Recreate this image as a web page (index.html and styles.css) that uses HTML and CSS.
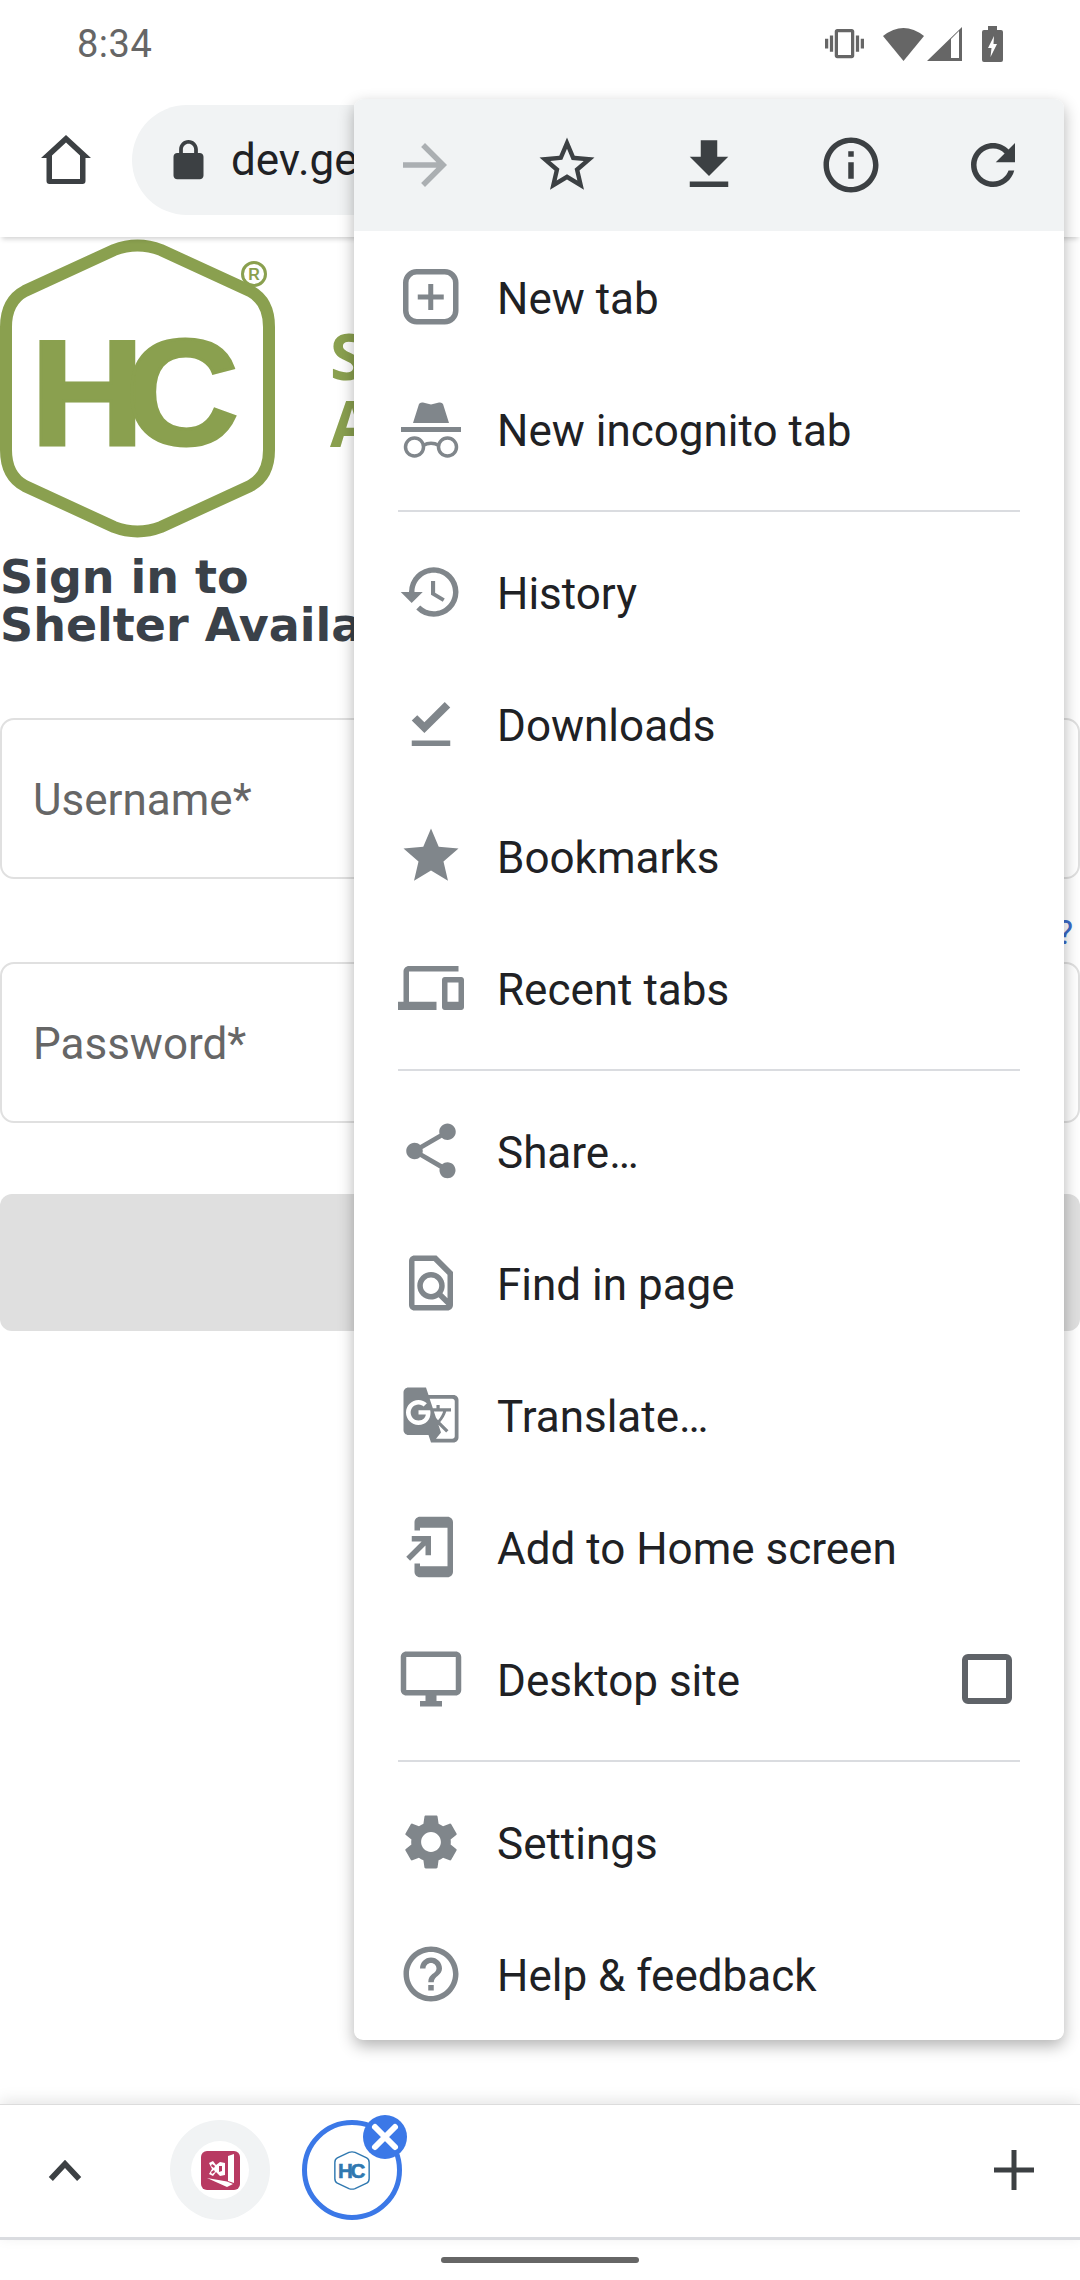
FILE: index.html
```html
<!DOCTYPE html>
<html>
<head>
  <title>Sign in - Shelter Availability</title>
  <link rel="stylesheet" href="styles.css">
</head>
<body>
  <div class="phone">
    <div class="status">
      <span class="time">8:34</span>
      <div class="status-icons">
        <svg class="st-vibrate" viewBox="0 0 24 24"><path d="M0 15h2V9H0v6zm3 2h2V7H3v10zm19-8v6h2V9h-2zm-3 8h2V7h-2v10zM16.5 3h-9C6.67 3 6 3.67 6 4.5v15c0 .83.67 1.5 1.5 1.5h9c.83 0 1.5-.67 1.5-1.5v-15c0-.83-.67-1.5-1.5-1.5zM16 19H8V5h8v14z"/></svg>
        <svg class="st-wifi" viewBox="0 0 41 34"><path d="M0 9Q20.500 -7 41 9L20.500 34Z"/></svg>
        <svg class="st-signal" viewBox="0 0 35 34"><path fill-rule="evenodd" d="M0 34L35 0V34ZM24 12V31H32V4Z"/></svg>
        <svg class="st-battery" viewBox="0 0 21 36"><path fill-rule="evenodd" d="M6 0H15V4H19Q21 4 21 6V34Q21 36 19 36H2Q0 36 0 34V6Q0 4 2 4H6ZM12 10L6 22H9.500L8.500 31L15 18H11.500Z"/></svg>
      </div>
    </div>

    <div class="toolbar">
      <svg class="home" viewBox="0 0 66 66"><path fill-rule="evenodd" d="M33 8L58 31H52.500V54Q52.500 57 49.500 57H16.500Q13.500 57 13.500 54V31H8ZM33 15.500L19 28.500V52H47V28.500Z"/></svg>
      <div class="omnibox">
        <svg class="lock" viewBox="0 0 24 24"><path d="M18 8h-1V6c0-2.760-2.240-5-5-5S7 3.240 7 6v2H6c-1.100 0-2 .9-2 2v10c0 1.100.9 2 2 2h12c1.100 0 2-.9 2-2V10c0-1.100-.9-2-2-2zM9 6c0-1.660 1.340-3 3-3s3 1.340 3 3v2H9V6z"/></svg>
        <span class="url">dev.ge</span>
      </div>
    </div>

    <main class="page">
      <div class="brand">
        <svg class="logo" viewBox="0 0 275 299">
          <path class="logo-hex" d="M114 11Q137.500 2 161 11L250 52Q269 62 269 88V211Q269 237 250 247L161 288Q137.500 297 114 288L25 247Q6 237 6 211V88Q6 62 25 52Z"/>
          <circle class="logo-reg" cx="254" cy="35" r="11.500"/>
          <text class="logo-r" x="254" y="41">R</text>
          <text class="logo-hc" transform="scale(1.050 1)" x="29" y="206.500">HC</text>
        </svg>
        <div class="brand-name">S<br>A</div>
      </div>
      <h1 class="signin">Sign in to<br>Shelter Availa</h1>
      <div class="field">Username*</div>
      <div class="forgot">?</div>
      <div class="field">Password*</div>
      <div class="submit"></div>
    </main>

    <div class="tabs">
      <div class="chevron">
        <svg viewBox="0 0 36 24"><path d="M3 21L18 5L33 21" /></svg>
      </div>
      <div class="tab">
        <div class="tab-inner">
          <svg class="favicon" viewBox="0 0 39 39">
            <rect width="39" height="39" rx="6" fill="#b83a62"/>
            <path fill="#fff" d="M27 5L33 3V32L27 30ZM6 27L26 30.500L32 33L26 36Z"/>
            <path fill="#fff" fill-rule="evenodd" d="M8 12L12 10L15 14L19 11L24 12V24L19 25L15 21L12 25L8 23L11 18ZM18 15V21L21 20V15ZM11 13L10 15L13 17L14 15ZM10 21L11 23L14 21L13 19Z"/>
          </svg>
        </div>
      </div>
      <div class="tab tab-active">
        <svg class="tab-logo" viewBox="0 0 275 299">
          <path class="mini-hex" d="M114 11Q137.500 2 161 11L250 52Q269 62 269 88V211Q269 237 250 247L161 288Q137.500 297 114 288L25 247Q6 237 6 211V88Q6 62 25 52Z"/>
          <text class="mini-hc" transform="scale(1.050 1)" x="29" y="206.500">HC</text>
        </svg>
        <div class="tab-close">
          <svg viewBox="0 0 44 44"><path d="M12 12L32 32M32 12L12 32"/></svg>
        </div>
      </div>
      <svg class="new-tab" viewBox="0 0 40 40"><path d="M17.500 0h5v17.500H40v5H22.500V40h-5V22.500H0v-5h17.500z"/></svg>
    </div>

    <div class="nav"><span class="nav-pill"></span></div>

    <div class="menu">
      <div class="menu-top">
        <svg class="top-icon disabled" viewBox="0 0 24 24"><path d="M12 4l-1.410 1.410L16.170 11H4v2h12.170l-5.580 5.590L12 20l8-8z"/></svg>
        <svg class="top-icon" viewBox="0 0 24 24"><path d="M22 9.240l-7.190-.62L12 2 9.190 8.630 2 9.240l5.460 4.730L5.820 21 12 17.270 18.180 21l-1.630-7.030L22 9.240zM12 15.400l-3.760 2.270 1-4.280-3.320-2.880 4.380-.38L12 6.100l1.710 4.040 4.380.38-3.320 2.880 1 4.280L12 15.400z"/></svg>
        <svg class="top-icon" viewBox="0 0 24 24"><path d="M19 9h-4V3H9v6H5l7 7 7-7zM5 18v2h14v-2H5z"/></svg>
        <svg class="top-icon" viewBox="0 0 24 24"><path d="M11 7h2v2h-2zm0 4h2v6h-2zm1-9C6.480 2 2 6.480 2 12s4.480 10 10 10 10-4.480 10-10S17.520 2 12 2zm0 18c-4.410 0-8-3.590-8-8s3.590-8 8-8 8 3.590 8 8-3.590 8-8 8z"/></svg>
        <svg class="top-icon" viewBox="0 0 24 24"><path d="M17.650 6.350C16.200 4.900 14.210 4 12 4c-4.420 0-7.990 3.580-7.990 8s3.570 8 7.990 8c3.730 0 6.840-2.550 7.730-6h-2.080c-.82 2.330-3.040 4-5.650 4-3.310 0-6-2.690-6-6s2.690-6 6-6c1.660 0 3.140.69 4.220 1.780L13 11h7V4l-2.350 2.350z"/></svg>
      </div>

      <div class="item">
        <svg class="item-icon" viewBox="0 0 66 66"><rect class="ic-line" x="7.750" y="7.750" width="50" height="50" rx="11"/><path class="ic-plus" d="M32.750 20V46M19.750 33H45.750"/></svg>
        <span>New tab</span>
      </div>
      <div class="item">
        <svg class="item-icon" viewBox="0 0 66 66"><path d="M15 27L21 8Q22 6 25 6.500L33 8.500L41 6.500Q44 6 45 8L51 27Z"/><rect x="3" y="31" width="60" height="5"/><circle class="ic-thin" cx="16.500" cy="51" r="9"/><circle class="ic-thin" cx="49.500" cy="51" r="9"/><path class="ic-thin" d="M25 49.500Q33 45 41 49.500"/></svg>
        <span>New incognito tab</span>
      </div>
      <div class="sep"></div>
      <div class="item">
        <svg class="item-icon" viewBox="0 0 24 24"><path d="M13 3a9 9 0 0 0-9 9H1l3.890 3.890.07.14L9 12H6c0-3.870 3.130-7 7-7s7 3.130 7 7-3.130 7-7 7c-1.930 0-3.680-.79-4.940-2.060l-1.420 1.420A8.954 8.954 0 0 0 13 21a9 9 0 0 0 0-18zm-1 5v5l4.280 2.540.72-1.210-3.500-2.080V8H12z"/></svg>
        <span>History</span>
      </div>
      <div class="item">
        <svg class="item-icon" viewBox="0 0 24 24"><path d="M5 18h14v2H5v-2zm4.600-2.700L5 10.700l2-1.900 2.600 2.600L17 4l2 2-9.400 9.300z"/></svg>
        <span>Downloads</span>
      </div>
      <div class="item">
        <svg class="item-icon" viewBox="0 0 24 24"><path d="M12 17.270L18.180 21l-1.640-7.030L22 9.240l-7.190-.61L12 2 9.190 8.630 2 9.240l5.460 4.730L5.820 21z"/></svg>
        <span>Bookmarks</span>
      </div>
      <div class="item">
        <svg class="item-icon" viewBox="0 0 24 24"><path d="M4 6h18V4H4c-1.100 0-2 .9-2 2v11H0v3h14v-3H4V6zm19 2h-6c-.55 0-1 .45-1 1v10c0 .55.45 1 1 1h6c.55 0 1-.45 1-1V9c0-.55-.45-1-1-1zm-1 9h-4v-7h4v7z"/></svg>
        <span>Recent tabs</span>
      </div>
      <div class="sep"></div>
      <div class="item">
        <svg class="item-icon" viewBox="0 0 24 24"><path d="M18 16.080c-.76 0-1.440.3-1.960.77L8.910 12.700c.05-.23.09-.46.09-.7s-.04-.47-.09-.7l7.050-4.110c.54.5 1.250.81 2.040.81 1.660 0 3-1.340 3-3s-1.340-3-3-3-3 1.340-3 3c0 .24.04.47.09.7L8.040 9.810C7.500 9.310 6.790 9 6 9c-1.660 0-3 1.340-3 3s1.340 3 3 3c.79 0 1.500-.31 2.040-.81l7.120 4.160c-.05.21-.08.43-.08.65 0 1.610 1.310 2.920 2.920 2.920 1.610 0 2.920-1.310 2.920-2.920s-1.310-2.920-2.920-2.920z"/></svg>
        <span>Share…</span>
      </div>
      <div class="item">
        <svg class="item-icon" viewBox="0 0 24 24"><path d="M14 2H6c-1.100 0-1.990.9-1.990 2L4 20c0 1.100.89 2 1.990 2H18c1.100 0 2-.9 2-2V8l-6-6zM6 4h7l5 5v8.580l-1.840-1.840c1.280-1.940 1.070-4.570-.64-6.280C14.550 8.490 13.280 8 12 8c-1.280 0-2.550.49-3.530 1.460-1.950 1.950-1.950 5.110 0 7.050.97.97 2.250 1.460 3.530 1.460.96 0 1.920-.28 2.750-.83L17.600 20H6V4zm8.110 11.100c-.56.56-1.310.88-2.110.88s-1.550-.31-2.110-.88c-.56-.56-.88-1.310-.88-2.110s.31-1.550.88-2.110c.56-.57 1.310-.88 2.110-.88s1.550.31 2.110.88c.56.56.88 1.310.88 2.110s-.31 1.550-.88 2.110z"/></svg>
        <span>Find in page</span>
      </div>
      <div class="item">
        <svg class="item-icon" viewBox="-1.200 -1.200 26.400 26.400"><path d="M21 4H11l-1-3H3c-1.100 0-2 .9-2 2v15c0 1.100.9 2 2 2h8l1 3h9c1.100 0 2-.9 2-2V6c0-1.100-.9-2-2-2zM7 16c-2.760 0-5-2.240-5-5s2.240-5 5-5c1.350 0 2.480.5 3.350 1.300L9.030 8.570c-.38-.36-1.040-.78-2.030-.78-1.740 0-3.150 1.440-3.150 3.210S5.260 14.210 7 14.210c2.010 0 2.840-1.440 2.920-2.410H7v-1.710h4.680c.07.31.12.61.12 1.020C11.800 13.970 9.890 16 7 16zm6.170-5.420h3.700c-.43 1.250-1.110 2.430-2.050 3.470-.31-.35-.6-.72-.86-1.100l-.79-2.370zm8.330 9.920c0 .55-.45 1-1 1H14l2-2.500-1.040-3.100 3.100 3.100.92-.92-3.300-3.250.02-.02c1.130-1.250 1.930-2.690 2.400-4.220H20v-1.300h-4.530V8h-1.290v1.290h-1.440L11.460 5.500h9.040c.55 0 1 .45 1 1v14z"/></svg>
        <span>Translate…</span>
      </div>
      <div class="item">
        <svg class="item-icon" viewBox="0 0 24 24"><path d="M18 1.010L8 1c-1.100 0-2 .9-2 2v3h2V5h10v14H8v-1H6v3c0 1.100.9 2 2 2h10c1.100 0 2-.9 2-2V3c0-1.100-.9-1.990-2-1.990zM10 15h2V8H5v2h3.590L3 15.590 4.410 17 10 11.410V15z"/></svg>
        <span>Add to Home screen</span>
      </div>
      <div class="item">
        <svg class="item-icon" viewBox="0 0 24 24"><path d="M21 2H3c-1.100 0-2 .9-2 2v12c0 1.100.9 2 2 2h7v2H8v2h8v-2h-2v-2h7c1.100 0 2-.9 2-2V4c0-1.100-.9-2-2-2zm0 14H3V4h18v12z"/></svg>
        <span>Desktop site</span>
        <div class="checkbox"></div>
      </div>
      <div class="sep"></div>
      <div class="item">
        <svg class="item-icon" viewBox="0 0 24 24"><path d="M19.140 12.940c.04-.3.06-.61.06-.94 0-.32-.02-.64-.07-.94l2.030-1.580c.18-.14.23-.41.12-.61l-1.920-3.320c-.12-.22-.37-.29-.59-.22l-2.390.96c-.5-.38-1.030-.7-1.620-.94l-.36-2.540c-.04-.24-.24-.41-.48-.41h-3.840c-.24 0-.43.17-.47.41l-.36 2.540c-.59.24-1.130.57-1.620.94l-2.390-.96c-.22-.08-.47 0-.59.22L2.740 8.870c-.12.21-.08.47.12.61l2.030 1.580c-.05.3-.09.63-.09.94s.02.64.07.94l-2.030 1.580c-.18.14-.23.41-.12.61l1.920 3.320c.12.22.37.29.59.22l2.390-.96c.5.38 1.030.7 1.620.94l.36 2.540c.05.24.24.41.48.41h3.840c.24 0 .44-.17.47-.41l.36-2.540c.59-.24 1.130-.56 1.620-.94l2.390.96c.22.08.47 0 .59-.22l1.920-3.320c.12-.22.07-.47-.12-.61l-2.010-1.580zM12 15.600c-1.980 0-3.600-1.620-3.600-3.600s1.620-3.600 3.600-3.600 3.600 1.620 3.600 3.600-1.620 3.600-3.600 3.600z"/></svg>
        <span>Settings</span>
      </div>
      <div class="item">
        <svg class="item-icon" viewBox="0 0 24 24"><path d="M11 18h2v-2h-2v2zm1-16C6.480 2 2 6.480 2 12s4.480 10 10 10 10-4.480 10-10S17.520 2 12 2zm0 18c-4.410 0-8-3.590-8-8s3.590-8 8-8 8 3.590 8 8-3.590 8-8 8zm0-14c-2.210 0-4 1.790-4 4h2c0-1.100.9-2 2-2s2 .9 2 2c0 2-3 1.750-3 5h2c0-2.250 3-2.500 3-5 0-2.210-1.790-4-4-4z"/></svg>
        <span>Help &amp; feedback</span>
      </div>
    </div>
  </div>
</body>
</html>
```

FILE: styles.css
```css
* { box-sizing: border-box; }
html, body { margin: 0; padding: 0; background: #fff; }
body { font-family: Roboto, "Liberation Sans", sans-serif; }

.phone {
  position: relative;
  width: 1080px;
  height: 2280px;
  display: flex;
  flex-direction: column;
  overflow: hidden;
  background: #fff;
}

/* status bar */
.status {
  height: 89px;
  flex: none;
  display: flex;
  align-items: center;
  justify-content: space-between;
  padding: 0 77px 2px 77px;
  color: #666;
}
.time { font-size: 38px; letter-spacing: .5px; }
.status-icons { display: flex; align-items: center; fill: #666; }
.status-icons svg { display: block; }
.st-vibrate { width: 39px; height: 39px; margin-right: 19px; }
.st-wifi { width: 41px; height: 34px; margin-right: 3px; }
.st-signal { width: 35px; height: 34px; margin-right: 20px; }
.st-battery { width: 21px; height: 36px; }

/* toolbar */
.toolbar {
  position: relative;
  z-index: 1;
  height: 148px;
  flex: none;
  display: flex;
  align-items: center;
  padding: 0 0 6px 33px;
  background: #fff;
  box-shadow: 0 4px 5px -2px rgba(0, 0, 0, .18);
}
.home { width: 66px; height: 66px; fill: #3c4043; flex: none; }
.omnibox {
  flex: 1;
  height: 110px;
  margin-left: 33px;
  margin-right: 24px;
  display: flex;
  align-items: center;
  padding-left: 34px;
  border-radius: 55px;
  background: #f1f3f4;
}
.lock { width: 45px; height: 45px; fill: #3c4043; flex: none; }
.url { margin-left: 20px; font-size: 44px; color: #202124; }

/* web page behind the menu */
.page { flex: 1; overflow: hidden; }
.brand { display: flex; align-items: center; margin-top: 2px; }
.logo { width: 275px; height: 299px; flex: none; display: block; }
.logo-hex { fill: none; stroke: #8aa04f; stroke-width: 12; }
.logo-reg { fill: none; stroke: #8aa04f; stroke-width: 3; }
.logo-r { fill: #8aa04f; font: 700 16px "Liberation Sans", sans-serif; text-anchor: middle; }
.logo-hc {
  fill: #8aa04f;
  stroke: #8aa04f;
  stroke-width: 3;
  font: 700 150px "Liberation Sans", sans-serif;
  letter-spacing: -18px;
}
.brand-name {
  margin-left: 55px;
  font: 700 64px/67px "Open Sans", sans-serif;
  color: #8aa04f;
  white-space: nowrap;
}
.signin {
  margin: 15px 0 0;
  font: 700 46px/48px "DejaVu Sans", sans-serif;
  color: #3a4149;
  white-space: nowrap;
}
.field {
  height: 161px;
  display: flex;
  align-items: center;
  padding: 2px 0 0 31px;
  border: 2px solid #e0e0e0;
  border-radius: 14px;
  font-size: 44px;
  color: #666;
}
.signin + .field { margin-top: 69px; }
.forgot {
  height: 83px;
  padding: 35px 7px 0 0;
  text-align: right;
  font-size: 34px;
  line-height: 36px;
  color: #3a6bc8;
}
.submit { height: 137px; margin-top: 71px; border-radius: 12px; background: #dfdfdf; }

/* tab strip */
.tabs {
  position: relative;
  z-index: 1;
  height: 136px;
  flex: none;
  display: flex;
  align-items: center;
  padding-bottom: 2px;
  background: #fff;
  border-top: 1px solid #dcdcdc;
  border-bottom: 3px solid #dadce0;
  box-shadow: 0 -4px 14px rgba(0, 0, 0, .1);
}
.chevron { width: 170px; padding-left: 48px; flex: none; display: flex; }
.chevron svg { width: 34px; height: 23px; fill: none; stroke: #3c4043; stroke-width: 6; }
.tab {
  width: 100px;
  height: 100px;
  flex: none;
  display: flex;
  align-items: center;
  justify-content: center;
  border-radius: 50%;
  background: #f1f3f4;
}
.tab-inner {
  width: 58px;
  height: 58px;
  display: flex;
  align-items: center;
  justify-content: center;
  border-radius: 50%;
  background: #fff;
}
.favicon { width: 39px; height: 39px; display: block; }
.tab-active {
  position: relative;
  margin-left: 32px;
  border: 5px solid #3b78e7;
  background: #fff;
}
.tab-logo { width: 36px; height: 39px; display: block; }
.mini-hex { fill: none; stroke: #2f78b0; stroke-width: 11; }
.mini-hc {
  fill: #2f78b0;
  stroke: #2f78b0;
  stroke-width: 4;
  font: 700 150px "Liberation Sans", sans-serif;
  letter-spacing: -18px;
}
.tab-close {
  position: absolute;
  top: -10px;
  right: -10px;
  width: 44px;
  height: 44px;
  border-radius: 50%;
  background: #3b78e7;
}
.tab-close svg { width: 44px; height: 44px; display: block; fill: none; stroke: #fff; stroke-width: 6; stroke-linecap: round; }
.new-tab { width: 40px; height: 40px; margin-left: auto; margin-right: 46px; fill: #3c4043; }

/* gesture bar */
.nav { height: 40px; flex: none; display: flex; justify-content: center; padding-top: 17px; }
.nav-pill { width: 198px; height: 6px; border-radius: 3px; background: #666; }

/* overflow menu */
.menu {
  position: absolute;
  z-index: 2;
  left: 354px;
  top: 99px;
  width: 710px;
  border-radius: 9px;
  overflow: hidden;
  background: #fff;
  box-shadow: 0 6px 16px rgba(0, 0, 0, .3);
}
.menu-top { height: 132px; display: flex; align-items: center; background: #f1f3f4; }
.top-icon { width: 66px; height: 66px; flex: none; margin: 0 38px; fill: #3c4043; }
.top-icon.disabled { fill: #abafb2; }
.item {
  height: 132px;
  display: flex;
  align-items: center;
  padding-left: 44px;
  font-size: 44px;
  color: #202124;
}
.item span { padding-top: 3px; }
.item-icon { width: 66px; height: 66px; flex: none; margin-right: 33px; fill: #80868b; }
.ic-line { fill: none; stroke: #80868b; stroke-width: 5.500; }
.ic-plus { fill: none; stroke: #80868b; stroke-width: 5; }
.ic-thin { fill: none; stroke: #80868b; stroke-width: 3.500; }
.sep { height: 31px; display: flex; align-items: center; margin: 0 44px; }
.sep::before { content: ""; flex: 1; height: 2px; background: #dadce0; }
.checkbox {
  width: 50px;
  height: 50px;
  margin-left: auto;
  margin-right: 52px;
  border: 6px solid #5f6368;
  border-radius: 6px;
}
```
